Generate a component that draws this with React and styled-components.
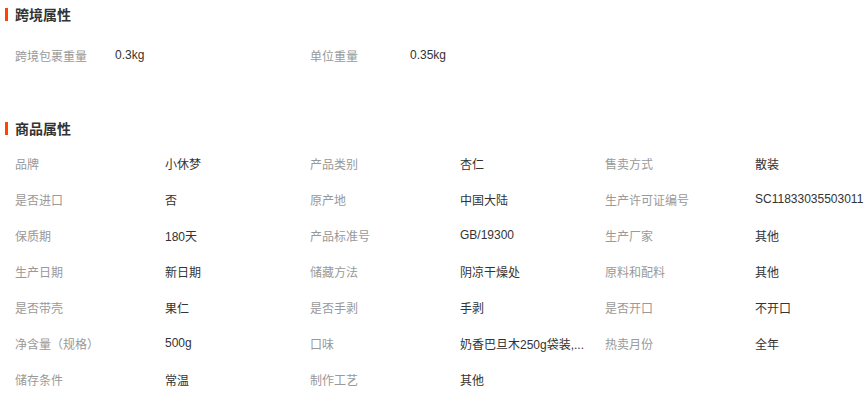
import styled, { createGlobalStyle } from "styled-components";

const GlobalStyle = createGlobalStyle`
  body {
    margin: 0;
    background: #fff;
    font-family: "Liberation Sans", "Noto Sans CJK SC", sans-serif;
    font-size: 12px;
  }
`;

const Page = styled.div`
  width: 868px;
`;

const Section = styled.section`
  padding-bottom: ${(p) => p.$bottom || 0}px;
`;

const Title = styled.h3`
  margin: 0;
  height: 28px;
  display: flex;
  align-items: center;
  font-size: 14px;
  font-weight: bold;
  color: #333;
  padding-left: 5px;

  &::before {
    content: "";
    width: 3px;
    height: 13px;
    background: #ff4400;
    margin-right: 7px;
  }
`;

const Grid = styled.div`
  display: grid;
  grid-template-columns: ${(p) => p.$cols};
  grid-auto-rows: 36px;
  padding-left: 15px;
  margin-top: ${(p) => p.$top}px;
`;

const Cell = styled.div`
  display: flex;
  align-items: center;
  white-space: nowrap;
  color: ${(p) => (p.$label ? "#999" : "#333")};
`;

const crossBorder = [
  ["跨境包裹重量", "0.3kg"],
  ["单位重量", "0.35kg"],
];

const attrs = [
  ["品牌", "小休梦"],
  ["产品类别", "杏仁"],
  ["售卖方式", "散装"],
  ["是否进口", "否"],
  ["原产地", "中国大陆"],
  ["生产许可证编号", "SC11833035503011"],
  ["保质期", "180天"],
  ["产品标准号", "GB/19300"],
  ["生产厂家", "其他"],
  ["生产日期", "新日期"],
  ["储藏方法", "阴凉干燥处"],
  ["原料和配料", "其他"],
  ["是否带壳", "果仁"],
  ["是否手剥", "手剥"],
  ["是否开口", "不开口"],
  ["净含量（规格）", "500g"],
  ["口味", "奶香巴旦木250g袋装,..."],
  ["热卖月份", "全年"],
  ["储存条件", "常温"],
  ["制作工艺", "其他"],
];

function Pairs({ items }) {
  return items.map(([k, v]) => [
    <Cell key={k + "-k"} $label>
      {k}
    </Cell>,
    <Cell key={k + "-v"}>{v}</Cell>,
  ]);
}

export default function App() {
  return (
    <Page>
      <GlobalStyle />
      <Section $bottom={41}>
        <Title>跨境属性</Title>
        <Grid $cols="100px 195px 100px 1fr" $top={9}>
          <Pairs items={crossBorder} />
        </Grid>
      </Section>
      <Section>
        <Title>商品属性</Title>
        <Grid $cols="150px 145px 150px 145px 150px 1fr" $top={3}>
          <Pairs items={attrs} />
        </Grid>
      </Section>
    </Page>
  );
}
